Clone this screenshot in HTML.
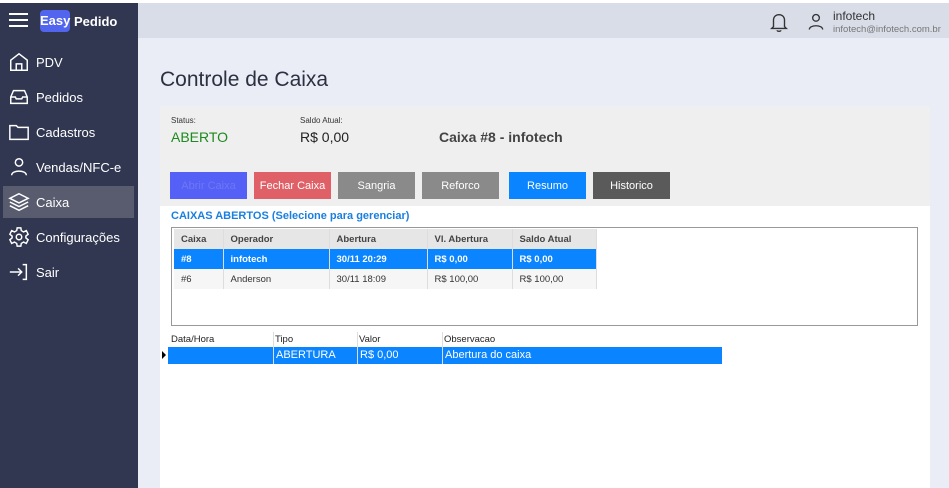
<!DOCTYPE html>
<html><head><meta charset="utf-8"><style>
*{margin:0;padding:0;box-sizing:border-box}
body{width:949px;height:488px;overflow:hidden;background:#fff;font-family:"Liberation Sans",sans-serif;position:relative}
.abs{position:absolute}
#side{left:0;top:3px;width:138px;height:485px;background:#323751;color:#fff}
#hdr{left:138px;top:3px;width:811px;height:35px;background:#d9dde8}
#main{left:138px;top:38px;width:811px;height:450px;background:#eaedf5}
.nav{position:absolute;left:8px;font-size:13px;color:#fff;display:flex;align-items:center}
.nav svg{width:22px;height:22px;margin-right:6px}
.btn{position:absolute;top:172px;width:77px;height:27px;color:#fff;font-size:11px;text-align:center;line-height:28px}
table{border-collapse:collapse;font-size:9.5px}
.t1 td{height:20px;padding-left:7px;border-right:1px solid #ddd}
</style></head><body>
<div class="abs" id="side">
 <div class="abs" style="left:9px;top:10px;width:19px;height:2px;background:#fff;box-shadow:0 6px 0 #fff,0 12px 0 #fff"></div>
 <div class="abs" style="left:40px;top:7px;width:30px;height:22px;background:#5265ee;border-radius:4px;font-weight:bold;font-size:13px;line-height:22px;text-align:center">Easy</div>
 <div class="abs" style="left:74px;top:11px;font-weight:bold;font-size:13px">Pedido</div>
 <div class="abs" style="left:3px;top:183px;width:131px;height:32px;background:#585c6e"></div>
 <div class="nav" style="top:48px"><svg viewBox="0 0 24 24" fill="none" stroke="#fff" stroke-width="1.6"><path d="M3 10 L12 3 L21 10 V21 H3 Z M9 21 V14 H15 V21"/></svg>PDV</div>
 <div class="nav" style="top:83px"><svg viewBox="0 0 24 24" fill="none" stroke="#fff" stroke-width="1.6"><path d="M3 12 L6 5 H18 L21 12 V19 H3 Z M3 12 H8 L9 14 H15 L16 12 H21"/></svg>Pedidos</div>
 <div class="nav" style="top:118px"><svg viewBox="0 0 24 24" fill="none" stroke="#fff" stroke-width="1.6"><path d="M2 5 H9 L11 7 H22 V20 H2 Z"/></svg>Cadastros</div>
 <div class="nav" style="top:153px"><svg viewBox="0 0 24 24" fill="none" stroke="#fff" stroke-width="1.6"><circle cx="12" cy="7" r="4"/><path d="M4 21 C4 15 20 15 20 21"/></svg>Vendas/NFC-e</div>
 <div class="nav" style="top:188px"><svg viewBox="0 0 24 24" fill="none" stroke="#fff" stroke-width="1.6"><path d="M12 3 L22 8 L12 13 L2 8 Z M2 12 L12 17 L22 12 M2 16 L12 21 L22 16"/></svg>Caixa</div>
 <div class="nav" style="top:223px"><svg viewBox="0 0 24 24" fill="none" stroke="#fff" stroke-width="1.6"><circle cx="12" cy="12" r="3"/><path d="M10 2 H14 L14.5 5 L17 6.5 L20 5 L22 9 L19.5 11 V13 L22 15 L20 19 L17 17.5 L14.5 19 L14 22 H10 L9.5 19 L7 17.5 L4 19 L2 15 L4.5 13 V11 L2 9 L4 5 L7 6.5 L9.5 5 Z"/></svg>Configurações</div>
 <div class="nav" style="top:258px"><svg viewBox="0 0 24 24" fill="none" stroke="#fff" stroke-width="1.6"><path d="M2 12 H15 M11 8 L15 12 L11 16 M16 4 H20 V20 H16"/></svg>Sair</div>
</div>
<div class="abs" id="hdr">
 <svg class="abs" style="left:630px;top:7px" width="22" height="24" viewBox="0 0 24 24" fill="none" stroke="#333" stroke-width="1.5"><path d="M6 17 V10 C6 6 9 4 12 4 C15 4 18 6 18 10 V17 L20 19 H4 Z M10 21 C10 22.5 14 22.5 14 21"/></svg>
 <svg class="abs" style="left:668px;top:8px" width="20" height="22" viewBox="0 0 24 24" fill="none" stroke="#333" stroke-width="1.6"><circle cx="12" cy="7" r="4"/><path d="M4 21 C4 15 20 15 20 21"/></svg>
 <div class="abs" style="left:695px;top:6px;font-size:12px;color:#333">infotech</div>
 <div class="abs" style="left:695px;top:21px;font-size:9.5px;color:#777">infotech@infotech.com.br</div>
</div>
<div class="abs" id="main"></div>
<div class="abs" style="left:160px;top:68px;font-size:21px;color:#2c3040">Controle de Caixa</div>
<div class="abs" style="left:160px;top:106px;width:770px;height:382px;background:#fff"></div>
<div class="abs" style="left:160px;top:106px;width:770px;height:100px;background:#efefef"></div>
<div class="abs" style="left:171px;top:116px;font-size:8px;color:#333">Status:</div>
<div class="abs" style="left:171px;top:129px;font-size:14px;color:#1d8a1d">ABERTO</div>
<div class="abs" style="left:300px;top:116px;font-size:8px;color:#333">Saldo Atual:</div>
<div class="abs" style="left:300px;top:129px;font-size:14px;color:#222">R$ 0,00</div>
<div class="abs" style="left:439px;top:129px;font-size:14px;color:#444;font-weight:bold">Caixa #8 - infotech</div>
<div class="btn" style="left:170px;background:#5560f7;color:#6e78f0">Abrir Caixa</div>
<div class="btn" style="left:254px;background:#e06068">Fechar Caixa</div>
<div class="btn" style="left:338px;background:#8a8a8a">Sangria</div>
<div class="btn" style="left:422px;background:#8a8a8a">Reforco</div>
<div class="btn" style="left:509px;background:#0a84ff">Resumo</div>
<div class="btn" style="left:593px;background:#5a5a5a">Historico</div>
<div class="abs" style="left:171px;top:210px;font-size:11px;font-weight:bold;color:#1a7fe0">CAIXAS ABERTOS (Selecione para gerenciar)</div>
<div class="abs" style="left:171px;top:227px;width:747px;height:99px;border:1px solid #999;background:#fff">
<table class="t1" style="position:absolute;left:2px;top:1px;color:#333">
<tr style="background:#e6e6e6;font-weight:bold;color:#444"><td style="width:49px">Caixa</td><td style="width:106px">Operador</td><td style="width:98px">Abertura</td><td style="width:85px">Vl. Abertura</td><td style="width:84px">Saldo Atual</td></tr>
<tr style="background:#0a84ff;color:#fff;font-weight:bold"><td>#8</td><td>infotech</td><td>30/11 20:29</td><td>R$ 0,00</td><td>R$ 0,00</td></tr>
<tr style="background:#f6f6f6"><td>#6</td><td>Anderson</td><td>30/11 18:09</td><td>R$ 100,00</td><td>R$ 100,00</td></tr>
</table></div>
<div class="abs" style="left:168px;top:332px;width:554px;height:15px;font-size:9.5px;color:#222">
<span class="abs" style="left:3px;top:2px">Data/Hora</span><span class="abs" style="left:107px;top:2px">Tipo</span><span class="abs" style="left:191px;top:2px">Valor</span><span class="abs" style="left:276px;top:2px">Observacao</span>
<div class="abs" style="left:105px;top:0;width:1px;height:15px;background:#ddd"></div><div class="abs" style="left:189px;top:0;width:1px;height:15px;background:#ddd"></div><div class="abs" style="left:274px;top:0;width:1px;height:15px;background:#ddd"></div></div>
<div class="abs" style="left:168px;top:347px;width:554px;height:17px;background:#0a84ff;color:#fff;font-size:11px">
<span class="abs" style="left:108px;top:2px">ABERTURA</span><span class="abs" style="left:192px;top:2px">R$ 0,00</span><span class="abs" style="left:277px;top:2px">Abertura do caixa</span>
<div class="abs" style="left:105px;top:0;width:1px;height:17px;background:#ddd"></div><div class="abs" style="left:189px;top:0;width:1px;height:17px;background:#ddd"></div><div class="abs" style="left:274px;top:0;width:1px;height:17px;background:#ddd"></div></div>
<div class="abs" style="left:162px;top:351px;width:0;height:0;border-top:4px solid transparent;border-bottom:4px solid transparent;border-left:4px solid #000"></div>
</body></html>
